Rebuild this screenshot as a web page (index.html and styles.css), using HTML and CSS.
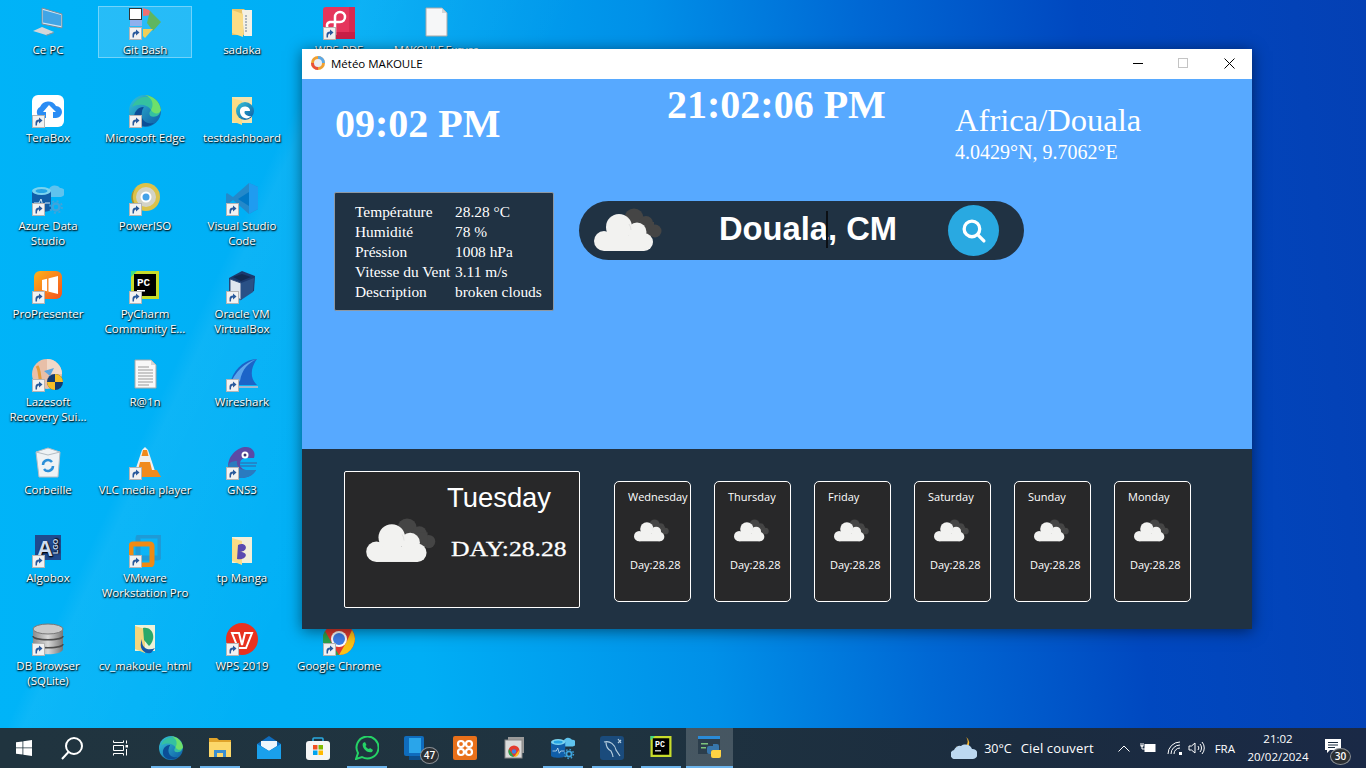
FILE: index.html
```html
<!DOCTYPE html>
<html lang="fr">
<head>
    <meta charset="UTF-8">
    <meta name="viewport" content="width=device-width, initial-scale=1.0">
    <title>Météo MAKOULE</title>
    <link rel="stylesheet" href="styles.css">
</head>
<body>

    <!-- Icones partagees -->
    <svg class="defs" width="0" height="0">
        <defs>
            <linearGradient id="g-edge" x1="0" y1="0" x2="1" y2="1"><stop offset="0" stop-color="#36c5d8"/><stop offset="1" stop-color="#0c59a4"/></linearGradient>
            <linearGradient id="g-orange" x1="0" y1="0" x2="1" y2="1"><stop offset="0" stop-color="#ffb31a"/><stop offset="1" stop-color="#f4511e"/></linearGradient>
            <linearGradient id="g-db" x1="0" y1="0" x2="1" y2="0"><stop offset="0" stop-color="#8b8b8b"/><stop offset=".5" stop-color="#d8d8d8"/><stop offset="1" stop-color="#777"/></linearGradient>
            <symbol id="i-sc" viewBox="0 0 13 13"><rect x=".5" y=".5" width="12" height="12" fill="#f2f2f2" stroke="#b5b5b5"/><path d="M3.500 10.500V7.500C3.500 5.500 5 4.500 7 4.500V2.500L10.500 5.500 7 8.500V6.500C5.500 6.500 5 7.500 5 10.500z" fill="#2a5a9c"/></symbol>
            <symbol id="i-pc" viewBox="0 0 32 32"><path d="M10 1L30 7V21L10 17z" fill="#cfe6f5" stroke="#7d8b99"/><path d="M11 3L29 8V19L11 15.500z" fill="#41a5e6"/><path d="M1 24L10 20 22 25 14 28z" fill="#d4d6d8"/><path d="M14 28L22 25V26L14 29z" fill="#8e9499"/></symbol>
            <symbol id="i-git" viewBox="0 0 32 32"><path d="M14 1L20 3 24 8 14 9z" fill="#f07070"/><path d="M21 4L32 15 24 24 18 16z" fill="#5fb65f"/><path d="M14 22H24L16 31 14 29z" fill="#f0cf58"/><rect x="1" y="13" width="12" height="6" fill="#8fb0ee"/><rect x=".5" y="1.500" width="12" height="11" fill="#fff" stroke="#333"/></symbol>
            <symbol id="i-folder" viewBox="0 0 32 32"><path d="M6 2H18L20 4H26V28H6z" fill="#e8c367"/><path d="M16 3H26V29H18z" fill="#f3f1e6"/><path d="M6 3L17 7V30L6 26z" fill="#fbdc85"/><path d="M20 8V26" stroke="#aeb6bd" stroke-width="2" stroke-dasharray="2 1"/></symbol>
            <symbol id="i-tb" viewBox="0 0 32 32"><rect width="32" height="32" rx="6" fill="#fff"/><path d="M9 23A6 6 0 0 1 8 12 9 9 0 0 1 24 11 6 6 0 0 1 24 23H21V17H24L17 10 11 17H14V23z" fill="#2a8cf4"/></symbol>
            <symbol id="i-edge" viewBox="0 0 32 32"><circle cx="16" cy="16" r="16" fill="url(#g-edge)"/><path d="M3 12C6 3 17-2 26 5 32 10 33 19 28 21 22 23 18 20 22 15 19 10 10 8 3 12z" fill="#35c1a0"/><path d="M22 15C25 20 31 19 32 15 31 6 24 1 16 0 24 3 25 10 22 15z" fill="#6ee06b"/><path d="M13 17C11 24 17 30 25 28 21 32 10 33 6 26 3 18 9 12 14 12 16 12 13 14 13 17z" fill="#0b4e97"/></symbol>
            <symbol id="i-fedge" viewBox="0 0 32 32"><path d="M6 2H26V28H6z" fill="#f3e3ad"/><path d="M6 3L16 6V30L6 26z" fill="#fbdc85"/><circle cx="19" cy="16" r="9" fill="url(#g-edge)"/><path d="M14 15A5 4 0 0 1 24 16H19C17 18 21 22 25 21 22 26 13 23 14 15z" fill="#fff"/></symbol>
            <symbol id="i-azure" viewBox="0 0 32 32"><path d="M17 14A4 4 0 0 1 17 6 6.500 6.500 0 0 1 28 5 4.500 4.500 0 0 1 29 14z" fill="#5fc3ee"/><path d="M0 8V26C0 30 19 30 19 26V8z" fill="#105ea8"/><ellipse cx="9.500" cy="8" rx="9.500" ry="4" fill="#7ad3ef"/><ellipse cx="9.500" cy="8" rx="6" ry="2" fill="#25a4e4"/><path d="M2 20H7L9 16 11 23 13 20H18" fill="none" stroke="#cfe8f7" stroke-width="1"/><circle cx="24" cy="24" r="3.500" fill="none" stroke="#3fa4dc" stroke-width="2.500"/><circle cx="24" cy="24" r="6" fill="none" stroke="#3fa4dc" stroke-width="1.800" stroke-dasharray="2 2.700"/></symbol>
            <symbol id="i-iso" viewBox="0 0 32 32"><circle cx="17" cy="14" r="14" fill="#dcc24a"/><circle cx="17" cy="14" r="10" fill="#d3d3c7"/><circle cx="17" cy="14" r="4.500" fill="#45a2e8" stroke="#fff" stroke-width="2"/><path d="M7 5A14 14 0 0 0 11 26 12 12 0 0 1 7 5z" fill="#a8922c"/></symbol>
            <symbol id="i-vs" viewBox="0 0 32 32"><path d="M23 0L32 4V26L23 31 7 17 1 22 0 20V11L1 10 7 14z" fill="#2489ca"/><path d="M23 0L32 4V26L23 31z" fill="#1f9cf0"/><path d="M23 9L12 16 23 23z" fill="#0078c6"/></symbol>
            <symbol id="i-pro" viewBox="0 0 32 32"><rect x="2" width="28" height="28" rx="6" fill="url(#g-orange)"/><path d="M10 9L26 5V23L10 19z" fill="#fff"/><rect x="15" y="5" width="1.500" height="17" fill="#f98d2e"/></symbol>
            <symbol id="i-pyc" viewBox="0 0 32 32"><rect width="28" height="28" x="2" fill="#c8dc2b"/><path d="M2 0H8L2 6z" fill="#3ddc84"/><rect x="5" y="3" width="22" height="22" fill="#000"/><text x="8" y="15" class="svg-pc">PC</text><rect x="8" y="19" width="8" height="1.500" fill="#fff"/></symbol>
            <symbol id="i-vbox" viewBox="0 0 32 32"><path d="M16 0L29 5 28 20 14 26 3 20 3 7z" fill="#1b3a6e"/><path d="M4 8L15 12 15 29 4 22z" fill="#dfe6ef" stroke="#33507f"/><path d="M15 12L28 7 27 21 15 29z" fill="#2a5186"/><path d="M7 6L16 3 25 6 15 10z" fill="#12294f"/></symbol>
            <symbol id="i-laze" viewBox="0 0 32 32"><circle cx="15" cy="15" r="15" fill="#e8bfa8"/><path d="M15 0A15 15 0 0 1 30 15H15z" fill="#f1d8c8"/><path d="M5 7C9 13 6 20 11 27" stroke="#e39b3a" stroke-width="3" fill="none"/><path d="M12 12L22 9 18 17z" fill="#5aa6e0"/><circle cx="23" cy="23" r="8" fill="#123a70"/><path d="M23 15A8 8 0 0 1 31 23H23z" fill="#f6bf26"/><path d="M23 31A8 8 0 0 1 15 23H23z" fill="#f6bf26"/></symbol>
            <symbol id="i-doc" viewBox="0 0 32 32"><path d="M6 1H22L27 6V29H6z" fill="#f8f8f8" stroke="#a9a9a9"/><path d="M22 1V6H27z" fill="#d5d5d5"/><path class="doc-lines" d="M9 8H20M9 11H24M9 14H24M9 17H24M9 20H24M9 23H24M9 26H20"/></symbol>
            <symbol id="i-blank" viewBox="0 0 32 32"><path d="M6 1H22L27 6V29H6z" fill="#f6f7f8" stroke="#a9a9a9"/><path d="M22 1V6H27z" fill="#d5d5d5"/></symbol>
            <symbol id="i-shark" viewBox="0 0 32 32"><path d="M31 0C22 0 10 7 5 21L2 26H31C24 19 24 10 31 0z" fill="#1c64c8"/><path d="M31 0C24 3 16 9 14 22L9 26H4C9 12 20 3 31 0z" fill="#5ea6ec"/><path d="M0 27H32V29H0z" fill="#9fb8cf"/></symbol>
            <symbol id="i-bin" viewBox="0 0 32 32"><path d="M4 5L16 1 28 5 26 30H7z" fill="#eef2f5" stroke="#b3bcc3"/><path d="M4 5L16 8 28 5" fill="none" stroke="#b3bcc3"/><path d="M11 18A5 5 0 0 1 20 15M21 19A5 5 0 0 1 12 22" stroke="#2c8fd8" stroke-width="2.500" fill="none"/></symbol>
            <symbol id="i-vlc" viewBox="0 0 32 32"><path d="M16 0L19 3 26 24H6L13 3z" fill="#f0f0f0"/><path d="M14 3H18L19.500 9H12.500zM11 15H21L23 23H9z" fill="#f08a1d"/><path d="M4 23H28L32 30H0z" fill="#f08a1d"/></symbol>
            <symbol id="i-gns" viewBox="0 0 32 32"><path d="M2 20C2 8 12 0 20 0 27 0 30 6 28 11H20C12 11 12 22 20 23H30C27 29 20 31 15 31 8 31 2 27 2 20z" fill="#5b4aa6"/><path d="M2 20C2 27 8 31 15 31 20 31 27 29 30 23H20C14 23 10 19 11 14 6 14 2 16 2 20z" fill="#2a7bbf"/><circle cx="19" cy="8" r="3.500" fill="#fff"/><circle cx="19" cy="8" r="1.500" fill="#3a2f70"/><path d="M14 16H31M14 19H30" stroke="#2a7bbf" stroke-width="1.500"/></symbol>
            <symbol id="i-algo" viewBox="0 0 32 32"><rect x="3" width="26" height="25" fill="#1f4a8e"/><text x="5" y="21" class="svg-a">A</text><text x="-19" y="26" class="svg-lgo" transform="rotate(-90)">LGO</text></symbol>
            <symbol id="i-vm" viewBox="0 0 32 32"><rect x="9" y="1" width="22" height="22" rx="2" fill="none" stroke="#1f9ad6" stroke-width="5"/><rect x="2" y="9" width="21" height="21" rx="2" fill="none" stroke="#f08a12" stroke-width="5"/></symbol>
            <symbol id="i-manga" viewBox="0 0 32 32"><path d="M6 2H26V28H6z" fill="#f3efd8"/><path d="M6 3L16 6V30L6 26z" fill="#fbdc85"/><path d="M12 10C20 6 24 16 14 17 24 17 20 26 11 24z" fill="#5a4bb0"/></symbol>
            <symbol id="i-dbb" viewBox="0 0 32 32"><path d="M1 5V26C1 33 31 33 31 26V5z" fill="url(#g-db)"/><ellipse cx="16" cy="6" rx="15" ry="5" fill="#c9c9c9" stroke="#777"/><path d="M1 13C1 18 31 18 31 13M1 21C1 26 31 26 31 21" fill="none" stroke="#4c4c4c" stroke-width="1.500"/></symbol>
            <symbol id="i-cv" viewBox="0 0 32 32"><path d="M6 2H26V28H6z" fill="#eef2d8"/><path d="M6 3L16 6V30L6 26z" fill="#f3d67e"/><path d="M14 5C24 3 28 16 20 23L15 17z" fill="#2aa86a"/><path d="M13 16C12 26 20 28 26 25L22 30C15 31 9 26 13 16z" fill="#1557a8"/></symbol>
            <symbol id="i-wps" viewBox="0 0 32 32"><circle cx="16" cy="16" r="16" fill="#e8321f"/><path d="M6 10H13L16 22 19 10H26L20 25H12z" fill="none" stroke="#fff" stroke-width="2"/></symbol>
            <symbol id="i-chrome" viewBox="0 0 32 32"><circle cx="16" cy="16" r="16" fill="#e33b2e"/><path d="M2 8L11 24 16 32A16 16 0 0 1 2 8z" fill="#2ba24c"/><path d="M16 32L24 18 29 7A16 16 0 0 1 16 32z" fill="#fbc116"/><circle cx="16" cy="16" r="8" fill="#fff"/><circle cx="16" cy="16" r="6" fill="#3f7fe8"/></symbol>
            <symbol id="i-pdf" viewBox="0 0 32 32"><rect width="32" height="32" rx="3" fill="#e5355c"/><rect x="26" width="6" height="32" fill="#d82a50"/><rect y="25" width="32" height="7" fill="#c91f47"/><path d="M12 28V10A5 5 0 1 1 17 15H7A4 4 0 1 0 12 19" fill="none" stroke="#fff" stroke-width="2.500"/></symbol>
            <symbol id="i-explorer" viewBox="0 0 24 24"><path d="M1 2H9L11 4H23V21H1z" fill="#e0a42a"/><rect x="1" y="6" width="22" height="15" fill="#fcd86a"/><path d="M6 21V14H18V21H15V17H9V21z" fill="#3a8fd0"/></symbol>
            <symbol id="i-mail" viewBox="0 0 24 24"><path d="M0 8L12 0 24 8V23H0z" fill="#0f6cbd"/><path d="M4 5H20V10L12 15 4 10z" fill="#eef6fc"/><path d="M0 8L12 15 24 8V23H0z" fill="#1aa0ec"/></symbol>
            <symbol id="i-store" viewBox="0 0 24 24"><path d="M7 6V3A1 1 0 0 1 8 2H16A1 1 0 0 1 17 3V6" fill="none" stroke="#2aa9e0" stroke-width="1.600"/><rect y="5" width="24" height="19" rx="3" fill="#f5f5f5"/><rect x="7" y="9" width="4.500" height="4.500" fill="#f25022"/><rect x="12.500" y="9" width="4.500" height="4.500" fill="#7fba00"/><rect x="7" y="14.500" width="4.500" height="4.500" fill="#00a4ef"/><rect x="12.500" y="14.500" width="4.500" height="4.500" fill="#ffb900"/></symbol>
            <symbol id="i-whatsapp" viewBox="0 0 24 24"><path d="M1 23L3 17A11 11 0 1 1 7 21z" fill="none" stroke="#25d366" stroke-width="2"/><path d="M8 7C6 11 12 18 17 16L18 14 15 12 14 13C12 12.500 11 11 10.500 10L11.500 9 10 6z" fill="#25d366"/></symbol>
            <symbol id="i-phone" viewBox="0 0 24 24"><rect x="0" width="20" height="20" rx="2" fill="#0f6cbd"/><rect x="5" y="2" width="12" height="15" fill="#2aa5ea"/><rect x="5" y="20" width="14" height="4" fill="#0c4f8c"/></symbol>
            <symbol id="i-xampp" viewBox="0 0 24 24"><rect width="24" height="24" rx="2" fill="#e8701a"/><g fill="none" stroke="#fff" stroke-width="2.200"><circle cx="8" cy="8" r="3"/><circle cx="16" cy="8" r="3"/><circle cx="8" cy="16" r="3"/><circle cx="16" cy="16" r="3"/></g></symbol>
            <symbol id="i-cwin" viewBox="0 0 24 24"><rect x="6" y="1" width="16" height="16" fill="#9a9a9a"/><rect x="3" y="4" width="17" height="18" fill="#dcdcdc" stroke="#888"/><circle cx="12" cy="15" r="5.500" fill="#e33b2e"/><path d="M7 13L12 21A5.500 5.500 0 0 1 7 13z" fill="#2ba24c"/><path d="M12 21L17 14A5.500 5.500 0 0 1 12 21z" fill="#fbc116"/><circle cx="12" cy="15.500" r="2.200" fill="#3f7fe8"/></symbol>
            <symbol id="i-mysql" viewBox="0 0 24 24"><rect width="24" height="24" rx="3" fill="#1a4b7c"/><path d="M4 6C10 4 15 9 16 14L20 20M6 6C6 11 9 14 11 15 12 17 13 19 13 21M18 3L21 7M18 7L21 4" fill="none" stroke="#b6cede" stroke-width="1.200"/></symbol>
            <symbol id="i-python" viewBox="0 0 24 24"><rect y="0" width="22" height="18" fill="#2c3e4c"/><rect width="22" height="3" fill="#2a8bd8"/><rect x="3" y="7" width="7" height="1.500" fill="#7dc47d"/><rect x="3" y="11" width="5" height="1.500" fill="#7dc47d"/><path d="M15 8H19A2 2 0 0 1 21 10V14H15A2 2 0 0 0 13 16V18H11A2 2 0 0 1 9 16V12A2 2 0 0 1 11 10H15z" fill="#3776ab"/><path d="M21 14H23V20A2 2 0 0 1 21 22H15A2 2 0 0 1 13 20V16A2 2 0 0 1 15 14z" fill="#ffd343"/></symbol>
            <symbol id="i-cloud" viewBox="0 0 68 44">
                <g fill="#454545"><circle cx="40" cy="10" r="9.500"/><circle cx="52" cy="15" r="7"/><circle cx="61" cy="23" r="6.500"/><rect x="40" y="14" width="20" height="14"/></g>
                <g fill="#f2f2f0"><circle cx="10" cy="33" r="10"/><circle cx="25" cy="19" r="13"/><circle cx="43" cy="24" r="9.500"/><circle cx="50" cy="34" r="9"/><rect x="10" y="28" width="40" height="15"/></g>
                <path d="M35 16A10 10 0 0 1 37 22" fill="none" stroke="#d4d4d4" stroke-width=".6"/>
            </symbol>
        </defs>
    </svg>

    <div class="desktop">
        <div class="desktop-icons">
            <div class="icon"><div class="pic"><svg><use href="#i-pc"/></svg></div><span>Ce PC</span></div>
            <div class="icon"><div class="pic"><svg><use href="#i-tb"/></svg><svg class="sc"><use href="#i-sc"/></svg></div><span>TeraBox</span></div>
            <div class="icon"><div class="pic"><svg><use href="#i-azure"/></svg><svg class="sc"><use href="#i-sc"/></svg></div><span>Azure Data Studio</span></div>
            <div class="icon"><div class="pic"><svg><use href="#i-pro"/></svg><svg class="sc"><use href="#i-sc"/></svg></div><span>ProPresenter</span></div>
            <div class="icon"><div class="pic"><svg><use href="#i-laze"/></svg><svg class="sc"><use href="#i-sc"/></svg></div><span>Lazesoft Recovery Sui...</span></div>
            <div class="icon"><div class="pic"><svg><use href="#i-bin"/></svg></div><span>Corbeille</span></div>
            <div class="icon"><div class="pic"><svg><use href="#i-algo"/></svg><svg class="sc"><use href="#i-sc"/></svg></div><span>Algobox</span></div>
            <div class="icon"><div class="pic"><svg><use href="#i-dbb"/></svg><svg class="sc"><use href="#i-sc"/></svg></div><span>DB Browser (SQLite)</span></div>

            <div class="icon selected"><div class="pic"><svg><use href="#i-git"/></svg><svg class="sc"><use href="#i-sc"/></svg></div><span>Git Bash</span></div>
            <div class="icon"><div class="pic"><svg><use href="#i-edge"/></svg><svg class="sc"><use href="#i-sc"/></svg></div><span>Microsoft Edge</span></div>
            <div class="icon"><div class="pic"><svg><use href="#i-iso"/></svg><svg class="sc"><use href="#i-sc"/></svg></div><span>PowerISO</span></div>
            <div class="icon"><div class="pic"><svg><use href="#i-pyc"/></svg><svg class="sc"><use href="#i-sc"/></svg></div><span>PyCharm Community E...</span></div>
            <div class="icon"><div class="pic"><svg><use href="#i-doc"/></svg></div><span>R@1n</span></div>
            <div class="icon one-line"><div class="pic"><svg><use href="#i-vlc"/></svg><svg class="sc"><use href="#i-sc"/></svg></div><span>VLC media player</span></div>
            <div class="icon"><div class="pic"><svg><use href="#i-vm"/></svg><svg class="sc"><use href="#i-sc"/></svg></div><span>VMware Workstation Pro</span></div>
            <div class="icon"><div class="pic"><svg><use href="#i-cv"/></svg></div><span>cv_makoule_html</span></div>

            <div class="icon"><div class="pic"><svg><use href="#i-folder"/></svg></div><span>sadaka</span></div>
            <div class="icon"><div class="pic"><svg><use href="#i-fedge"/></svg></div><span>testdashboard</span></div>
            <div class="icon"><div class="pic"><svg><use href="#i-vs"/></svg><svg class="sc"><use href="#i-sc"/></svg></div><span>Visual Studio Code</span></div>
            <div class="icon"><div class="pic"><svg><use href="#i-vbox"/></svg><svg class="sc"><use href="#i-sc"/></svg></div><span>Oracle VM VirtualBox</span></div>
            <div class="icon"><div class="pic"><svg><use href="#i-shark"/></svg><svg class="sc"><use href="#i-sc"/></svg></div><span>Wireshark</span></div>
            <div class="icon"><div class="pic"><svg><use href="#i-gns"/></svg><svg class="sc"><use href="#i-sc"/></svg></div><span>GNS3</span></div>
            <div class="icon"><div class="pic"><svg><use href="#i-manga"/></svg></div><span>tp Manga</span></div>
            <div class="icon"><div class="pic"><svg><use href="#i-wps"/></svg><svg class="sc"><use href="#i-sc"/></svg></div><span>WPS 2019</span></div>

            <div class="icon"><div class="pic"><svg><use href="#i-pdf"/></svg><svg class="sc"><use href="#i-sc"/></svg></div><span>WPS PDF</span></div>
            <div class="icon chrome-cell"><div class="pic"><svg><use href="#i-chrome"/></svg><svg class="sc"><use href="#i-sc"/></svg></div><span>Google Chrome</span></div>
            <div class="icon one-line tight"><div class="pic"><svg><use href="#i-blank"/></svg></div><span>MAKOULE Excuse</span></div>
        </div>

        <div class="window">
            <div class="title-bar">
                <svg class="app-logo" viewBox="0 0 14 14">
                    <circle cx="7" cy="7" r="7" fill="#f0a030"/>
                    <path d="M7 0A7 7 0 0 1 14 7H7z" fill="#5aa9e8"/>
                    <path d="M0 7A7 7 0 0 0 7 14V7z" fill="#e8503a"/>
                    <circle cx="7" cy="7" r="4" fill="#e8eef5"/>
                </svg>
                <span class="app-title">Météo MAKOULE</span>
                <div class="win-controls">
                    <button class="win-btn"><span class="ctl-min"></span></button>
                    <button class="win-btn"><span class="ctl-max"></span></button>
                    <button class="win-btn">
                        <svg class="ctl-close" viewBox="0 0 11 11"><path d="M.5.5L10.500 10.500M10.500.5L.5 10.500"/></svg>
                    </button>
                </div>
            </div>

            <div class="upper">
                <div class="clocks">
                    <div class="clock-local">09:02 PM</div>
                    <div class="clock-now">21:02:06 PM</div>
                    <div class="place">
                        <div class="zone">Africa/Douala</div>
                        <div class="coords">4.0429°N, 9.7062°E</div>
                    </div>
                </div>
                <div class="current">
                    <div class="info-box">
                        <div>Température</div><div>28.28 °C</div>
                        <div>Humidité</div><div>78 %</div>
                        <div>Préssion</div><div>1008 hPa</div>
                        <div>Vitesse du Vent</div><div>3.11 m/s</div>
                        <div>Description</div><div>broken clouds</div>
                    </div>
                    <div class="search-bar">
                        <svg class="search-cloud"><use href="#i-cloud"/></svg>
                        <div class="search-text">Douala<span class="caret"></span>, CM</div>
                        <button class="search-btn">
                            <svg viewBox="0 0 26 26"><circle cx="11.500" cy="11.500" r="7.500"/><path d="M17 17L23 23"/></svg>
                        </button>
                    </div>
                </div>
            </div>

            <div class="forecast">
                <div class="today-card">
                    <div class="today-name">Tuesday</div>
                    <svg class="today-cloud"><use href="#i-cloud"/></svg>
                    <div class="today-temp"><span>DAY:28.28</span></div>
                </div>
                <div class="day-list">
                    <div class="day-card"><div class="day-name">Wednesday</div><svg class="day-cloud"><use href="#i-cloud"/></svg><div class="day-temp">Day:28.28</div></div>
                    <div class="day-card"><div class="day-name">Thursday</div><svg class="day-cloud"><use href="#i-cloud"/></svg><div class="day-temp">Day:28.28</div></div>
                    <div class="day-card"><div class="day-name">Friday</div><svg class="day-cloud"><use href="#i-cloud"/></svg><div class="day-temp">Day:28.28</div></div>
                    <div class="day-card"><div class="day-name">Saturday</div><svg class="day-cloud"><use href="#i-cloud"/></svg><div class="day-temp">Day:28.28</div></div>
                    <div class="day-card"><div class="day-name">Sunday</div><svg class="day-cloud"><use href="#i-cloud"/></svg><div class="day-temp">Day:28.28</div></div>
                    <div class="day-card"><div class="day-name">Monday</div><svg class="day-cloud"><use href="#i-cloud"/></svg><div class="day-temp">Day:28.28</div></div>
                </div>
            </div>
        </div>
    </div>

    <div class="taskbar">
        <div class="task-sys">
            <svg viewBox="0 0 16 16" class="start"><path d="M0 2.300L6.500 1.400V7.500H0zM7.300 1.300L16 0V7.500H7.300zM0 8.300H6.500V14.600L0 13.700zM7.300 8.300H16V16L7.300 14.700z"/></svg>
        </div>
        <div class="task-sys">
            <svg viewBox="0 0 24 24" class="search-glass"><circle cx="14" cy="10" r="8"/><path d="M8.500 16L2 23"/></svg>
        </div>
        <div class="task-sys">
            <svg viewBox="0 0 16 16" class="task-view"><path d="M1.500 .5V2.500H11.500V.5M1.500 15.500V13.500H11.500V15.500M1.500 5.500H11.500V10.500H1.500zM14.500 .5V3.500M14.500 9V15.500"/><rect x="13.500" y="5" width="2.500" height="2.500" fill="#fff" stroke="none"/></svg>
        </div>
        <div class="task-apps">
            <div class="task-app on"><svg><use href="#i-edge"/></svg></div>
            <div class="task-app on"><svg><use href="#i-explorer"/></svg></div>
            <div class="task-app"><svg><use href="#i-mail"/></svg></div>
            <div class="task-app"><svg><use href="#i-store"/></svg></div>
            <div class="task-app on"><svg><use href="#i-whatsapp"/></svg></div>
            <div class="task-app"><svg><use href="#i-phone"/></svg><span class="count">47</span></div>
            <div class="task-app"><svg><use href="#i-xampp"/></svg></div>
            <div class="task-app"><svg><use href="#i-cwin"/></svg></div>
            <div class="task-app on"><svg><use href="#i-azure"/></svg></div>
            <div class="task-app on"><svg><use href="#i-mysql"/></svg></div>
            <div class="task-app on"><svg><use href="#i-pyc"/></svg></div>
            <div class="task-app on active"><svg><use href="#i-python"/></svg></div>
        </div>

        <div class="tray">
            <svg class="tray-weather" viewBox="0 0 26 24">
                <path d="M15 1A7 7 0 1 1 5 10 6 6 0 0 0 15 1z" fill="#f5b52e"/>
                <path d="M5 23A4.500 4.500 0 0 1 3 14 6 6 0 0 1 10 10 7 7 0 0 1 21 13 5 5 0 0 1 22 23z" fill="#bcd8f0"/>
            </svg>
            <span class="tray-temp">30°C</span>
            <span class="tray-sky">Ciel couvert</span>
            <svg class="tray-icon tray-up" viewBox="0 0 12 7"><path d="M.5 6.500L6 1 11.500 6.500"/></svg>
            <svg class="tray-icon tray-bat" viewBox="0 0 16 12"><path d="M1 1V4H3V1M.5 4H3.500M2 4V7H5"/><rect x="5" y="2.500" width="10" height="7" fill="#fff"/></svg>
            <svg class="tray-icon tray-wifi" viewBox="0 0 16 14"><path d="M1 13A12 12 0 0 1 13 1M4 13A9 9 0 0 1 13 4M7 13A6 6 0 0 1 13 7"/><rect x="12" y="11" width="3" height="3" fill="#fff" stroke="none"/></svg>
            <svg class="tray-icon tray-vol" viewBox="0 0 17 14"><path d="M1 5V9H3.500L7 12V2L3.500 5zM10 5A3 3 0 0 1 10 9M12 3A6 6 0 0 1 12 11M14 1A9 9 0 0 1 14 13"/></svg>
            <span class="tray-lang">FRA</span>
            <div class="tray-clock"><div>21:02</div><div>20/02/2024</div></div>
            <div class="tray-notif">
                <svg viewBox="0 0 16 14"><path d="M0 0H16V11H5L2 14V11H0z" fill="#fff"/><path d="M3 3.500H13M3 6H13M3 8.500H10" stroke="#1b2c3f"/></svg>
                <span class="count">30</span>
            </div>
        </div>
    </div>

</body>
</html>
```

FILE: styles.css
```css
html, body {
    margin: 0;
    height: 100%;
}
body {
    width: 1366px;
    height: 768px;
    overflow: hidden;
    display: flex;
    flex-direction: column;
    font-family: "Open Sans", "Noto Sans", sans-serif;
    background:
        linear-gradient(115deg, rgba(255,255,255,0) 20%, rgba(255,255,255,.05) 21%, rgba(255,255,255,0) 34%),
        linear-gradient(84deg, #00b4f8 0%, #00aef5 30%, #0090e8 50%, #0068d4 65%, #0048c0 80%, #0440b4 100%);
}
.defs {
    position: absolute;
}
.desktop {
    flex: 1;
    position: relative;
}

/* icones du bureau */
.desktop-icons {
    display: grid;
    grid-auto-flow: column;
    grid-template-rows: repeat(8, 88px);
    grid-auto-columns: 97px;
    padding: 6px 0 0 1px;
}
.icon {
    width: 94px;
    height: 52px;
    box-sizing: border-box;
    display: flex;
    flex-direction: column;
    align-items: center;
    border: 1px solid transparent;
    color: #fff;
    font-size: 11.5px;
    line-height: 15px;
    text-align: center;
    text-shadow: 0 1px 2px #000, 1px 1px 1px rgba(0,0,0,.7);
}
.icon.selected {
    background: rgba(255,255,255,.15);
    border-color: rgba(255,255,255,.35);
}
.one-line span {
    white-space: nowrap;
}
.tight span {
    letter-spacing: -.7px;
}
.chrome-cell {
    grid-row: 8;
}
.pic {
    position: relative;
    width: 32px;
    height: 32px;
    margin: 0 0 3px;
    flex: none;
}
.pic svg {
    display: block;
    width: 32px;
    height: 32px;
}
.pic .sc {
    position: absolute;
    left: 0;
    bottom: -1px;
    width: 13px;
    height: 13px;
}
.svg-pc {
    font: bold 11px "Liberation Mono", monospace;
    fill: #fff;
}
.svg-a {
    font: bold 22px "Liberation Sans", sans-serif;
    fill: #cfdcf0;
}
.svg-lgo {
    font: bold 7px "Liberation Sans", sans-serif;
    fill: #cfdcf0;
}
.doc-lines {
    stroke: #9a9a9a;
    fill: none;
}

/* fenetre */
.window {
    position: absolute;
    left: 302px;
    top: 49px;
    width: 950px;
    box-shadow: 0 2px 14px rgba(0,0,0,.5);
}
.title-bar {
    height: 30px;
    box-sizing: border-box;
    padding: 0 0 2px 9px;
    background: #fff;
    display: flex;
    align-items: center;
}
.app-logo {
    width: 14px;
    height: 14px;
}
.app-title {
    margin-left: 6px;
    font-size: 11.5px;
    color: #000;
}
.win-controls {
    margin-left: auto;
    display: flex;
}
.win-btn {
    width: 46px;
    height: 28px;
    padding: 0;
    border: 0;
    background: none;
    display: flex;
    align-items: center;
    justify-content: center;
}
.ctl-min {
    width: 10px;
    height: 1px;
    margin-left: 1px;
    background: #000;
}
.ctl-max {
    width: 8px;
    height: 8px;
    border: 1px solid #c4c4c4;
}
.ctl-close {
    width: 11px;
    height: 11px;
    stroke: #000;
    fill: none;
}

.upper {
    height: 370px;
    background: #57a9ff;
    font-family: "Liberation Serif", serif;
    color: #fff;
}
.clocks {
    height: 113px;
    box-sizing: border-box;
    padding-left: 33px;
    display: grid;
    grid-template-columns: 332px 288px 1fr;
}
.clock-local {
    margin-top: 22px;
    font-size: 40px;
    line-height: 46px;
    font-weight: bold;
}
.clock-now {
    margin-top: 3px;
    font-size: 40px;
    line-height: 46px;
    font-weight: bold;
}
.place {
    margin-top: 23px;
}
.zone {
    font-size: 32.6px;
    line-height: 37px;
}
.coords {
    margin-top: 2px;
    font-size: 20px;
    line-height: 23px;
}
.current {
    display: flex;
    align-items: flex-start;
    padding-left: 32px;
}
.info-box {
    width: 220px;
    height: 119px;
    box-sizing: border-box;
    padding: 9px 0 0 20px;
    display: grid;
    grid-template-columns: 100px 1fr;
    grid-auto-rows: 20px;
    background: #203243;
    border: 1px solid #8d98a3;
    border-radius: 2px;
    font-size: 15.4px;
    line-height: 20px;
    white-space: nowrap;
}
.search-bar {
    width: 445px;
    height: 59px;
    margin: 9px 0 0 25px;
    border-radius: 30px;
    background: #203243;
    display: flex;
    align-items: center;
    position: relative;
    font-family: "Liberation Sans", sans-serif;
}
.search-cloud {
    width: 68px;
    height: 44px;
    margin: -2px 0 0 15px;
    flex: none;
}
.search-text {
    margin: -4px 0 0 57px;
    font-size: 32.7px;
    font-weight: bold;
    line-height: 38px;
    white-space: nowrap;
}
.caret {
    display: inline-block;
    width: 2px;
    height: 37px;
    margin: 0 0 0 -2px;
    background: #0b0f14;
    vertical-align: -8px;
}
.search-btn {
    position: absolute;
    left: 369px;
    top: 4px;
    width: 51px;
    height: 51px;
    padding: 12px;
    border: 0;
    border-radius: 50%;
    background: #29a9e1;
}
.search-btn svg {
    display: block;
    width: 27px;
    height: 27px;
    fill: none;
    stroke: #fff;
    stroke-width: 3.2;
    stroke-linecap: round;
}

/* previsions */
.forecast {
    height: 180px;
    box-sizing: border-box;
    background: #203243;
    display: flex;
    align-items: flex-start;
    padding: 22px 0 0 42px;
    color: #fff;
}
.today-card {
    width: 236px;
    height: 137px;
    box-sizing: border-box;
    background: #282829;
    border: 1px solid #fff;
    border-radius: 2px;
    display: grid;
    grid-template-columns: 102px 1fr;
    grid-template-rows: 46px auto;
    flex: none;
}
.today-name {
    grid-column: 2;
    font-family: "Liberation Sans", sans-serif;
    font-size: 27.4px;
    line-height: 52px;
    white-space: nowrap;
}
.today-cloud {
    grid-column: 1;
    grid-row: 2;
    width: 70px;
    height: 45px;
    margin: 0 0 0 21px;
}
.today-temp {
    grid-column: 2;
    grid-row: 2;
    margin: 19px 0 0 4px;
    font-family: "Liberation Serif", serif;
    font-size: 21px;
    line-height: 24px;
    white-space: nowrap;
    -webkit-text-stroke: .3px #fff;
}
.today-temp span {
    display: inline-block;
    transform: scaleX(1.22);
    transform-origin: left;
}
.day-list {
    display: flex;
    gap: 23px;
    margin: 10px 0 0 34px;
}
.day-card {
    width: 77px;
    height: 121px;
    box-sizing: border-box;
    background: #282829;
    border: 1px solid #fff;
    border-radius: 5px;
    padding: 7px 0 0 13px;
    font-size: 11px;
    line-height: 15px;
    white-space: nowrap;
}
.day-cloud {
    display: block;
    width: 35px;
    height: 23px;
    margin: 15px 0 0 6px;
}
.day-temp {
    margin: 15px 0 0 2px;
}

/* barre des taches */
.taskbar {
    height: 40px;
    background: linear-gradient(90deg, #20343f 0%, #1f3340 45%, #1b2c3f 75%, #1a2946 100%);
    display: flex;
    align-items: stretch;
    color: #fff;
    font-size: 12.5px;
}
.task-sys {
    width: 48px;
    display: flex;
    align-items: center;
    justify-content: center;
    flex: none;
}
.start {
    width: 16px;
    height: 16px;
    fill: #fff;
}
.search-glass {
    width: 24px;
    height: 24px;
    fill: none;
    stroke: #fff;
    stroke-width: 2;
}
.task-view {
    width: 16px;
    height: 16px;
    fill: none;
    stroke: #fff;
}
.task-apps {
    display: flex;
    margin-left: 2px;
}
.task-app {
    width: 49px;
    position: relative;
    display: flex;
    align-items: center;
    justify-content: center;
    box-sizing: border-box;
}
.task-app svg {
    width: 24px;
    height: 24px;
}
.task-app.on::after {
    content: "";
    position: absolute;
    left: 5px;
    right: 4px;
    bottom: 0;
    height: 2px;
    background: #6cb4ec;
}
.task-app.active {
    background: rgba(255,255,255,.18);
    width: 47px;
    margin-left: 1px;
}
.task-app.active::after {
    left: 0;
    right: 0;
}
.count {
    position: absolute;
    width: 19px;
    height: 17px;
    box-sizing: border-box;
    border: 1px solid #8a8f94;
    border-radius: 50%;
    background: #2b2f33;
    font-size: 10px;
    font-weight: 600;
    line-height: 15px;
    text-align: center;
    color: #fff;
}
.task-app .count {
    left: 29px;
    top: 19px;
}
.tray {
    margin-left: auto;
    display: flex;
    align-items: center;
}
.tray-weather {
    width: 26px;
    height: 24px;
}
.tray-temp {
    margin-left: 7px;
}
.tray-sky {
    margin-left: 9px;
    font-size: 13px;
    letter-spacing: .15px;
}
.tray-icon {
    fill: none;
    stroke: #fff;
}
.tray-up {
    width: 12px;
    height: 7px;
    margin-left: 24px;
}
.tray-bat {
    width: 16px;
    height: 12px;
    margin-left: 10px;
}
.tray-wifi {
    width: 16px;
    height: 14px;
    margin-left: 11px;
}
.tray-vol {
    width: 17px;
    height: 14px;
    margin-left: 5px;
}
.tray-lang {
    margin-left: 10px;
    font-size: 11.5px;
}
.tray-clock {
    width: 70px;
    margin-left: 8px;
    text-align: center;
    font-size: 11.5px;
    line-height: 18px;
}
.tray-notif {
    position: relative;
    width: 46px;
    margin-left: 7px;
    align-self: stretch;
    display: flex;
    align-items: center;
}
.tray-notif svg {
    width: 16px;
    height: 14px;
    margin: -4px 0 0 5px;
}
.tray-notif .count {
    left: 10px;
    top: 20px;
    width: 21px;
}
```
